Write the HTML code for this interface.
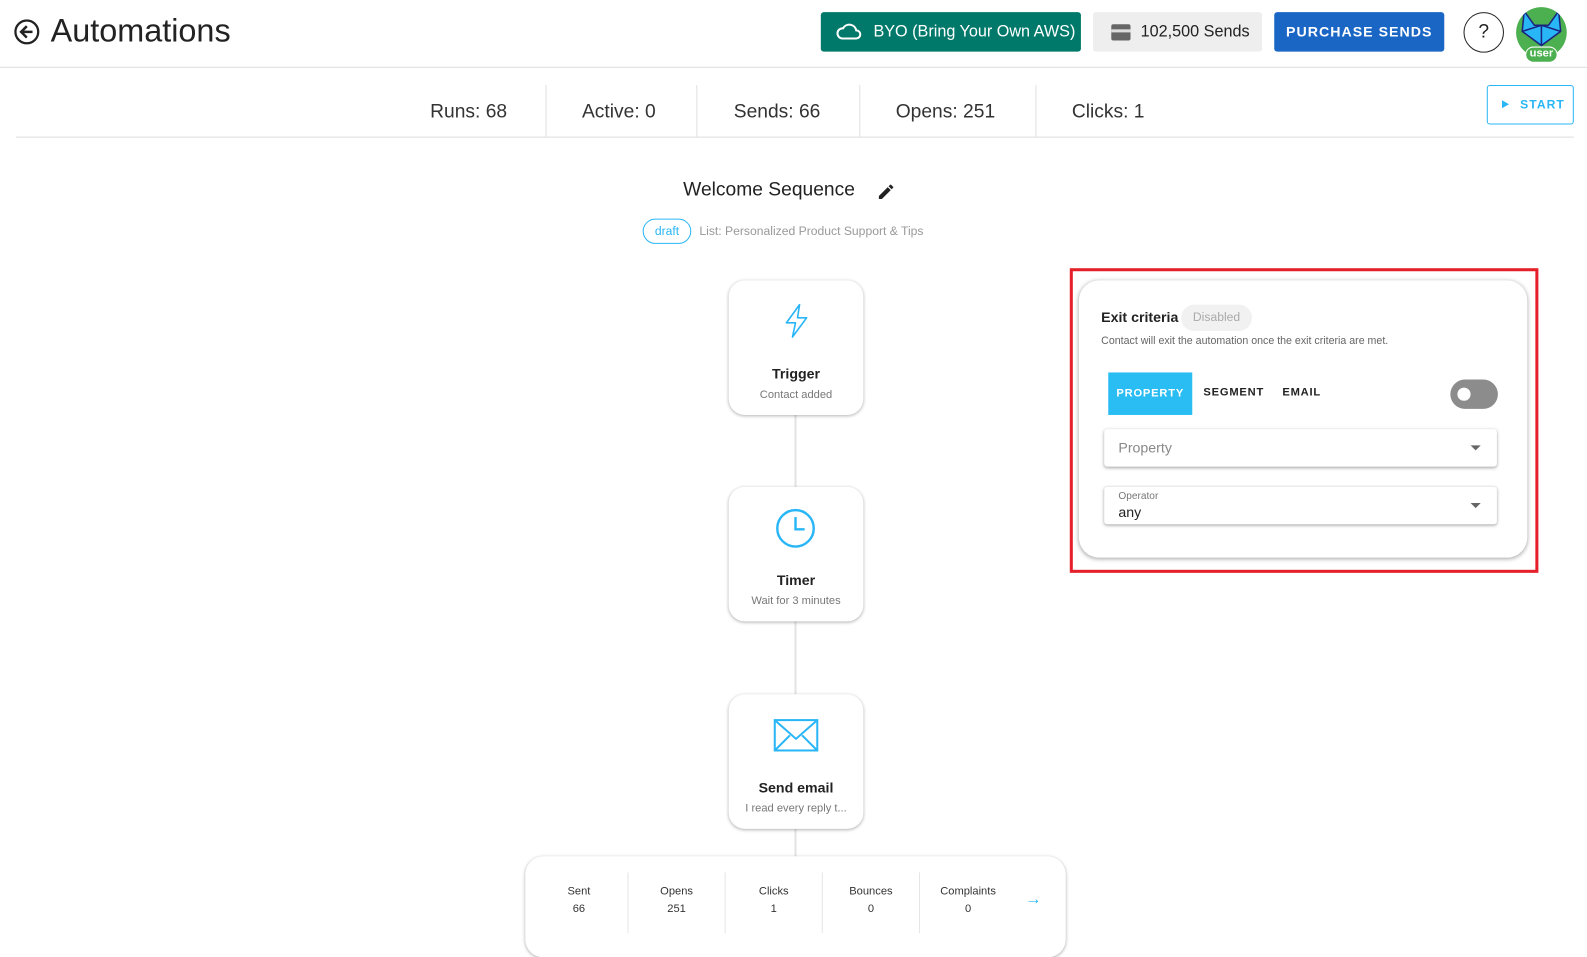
<!DOCTYPE html>
<html><head><meta charset="utf-8"><style>
*{box-sizing:border-box;margin:0;padding:0}
body{width:1587px;height:931px;overflow:hidden;background:#fff;font-family:"Liberation Sans",sans-serif;color:#222;position:relative}
#w{position:absolute;left:0;top:0;width:1568px;height:920px;transform:scale(1.0121);transform-origin:0 0}
.a{position:absolute}
.card{position:absolute;background:#fff;border-radius:16px;box-shadow:0 1px 3px rgba(0,0,0,.3);text-align:center}
.card .t{position:absolute;left:0;right:0;font-weight:bold;font-size:14px;color:#222}
.card .s{position:absolute;left:0;right:0;font-size:11px;color:#777}
.vl{position:absolute;left:785px;width:2px;background:#e3e3e3}
.st{position:absolute;top:111px;font-size:19px;color:#333;transform:translateY(-50%)}
.sd{position:absolute;top:84px;height:51px;width:1px;background:#e0e0e0}
.cell{position:absolute;top:0;height:100%;width:96px;text-align:center;font-size:11px;color:#333}
</style></head><body><div id="w">
<svg class="a" style="left:13px;top:18px" width="27" height="27" viewBox="0 0 24 24"><circle cx="12" cy="12" r="10" fill="none" stroke="#222" stroke-width="2"/><path d="M17 12H8M12 7l-5 5 5 5" fill="none" stroke="#222" stroke-width="2.2"/></svg>
<div class="a" style="left:50px;top:12px;font-size:32px;color:#222">Automations</div>
<div class="a" style="left:811px;top:12px;width:257px;height:39px;background:#00796b;border-radius:3px;color:#fff;font-size:16px;line-height:39px;padding-left:52px">BYO (Bring Your Own AWS)</div>
<svg class="a" style="left:826px;top:21px" width="26" height="20" viewBox="0 0 26 20"><path d="M6 17h14a4 4 0 0 0 0-8 7 7 0 0 0-13-2 5 5 0 0 0-1 10z" fill="none" stroke="#fff" stroke-width="2"/></svg>
<div class="a" style="left:1080px;top:12px;width:167px;height:39px;background:#eee;border-radius:3px;font-size:16px;line-height:39px;padding-left:47px;color:#222">102,500 Sends</div>
<div class="a" style="left:1098px;top:24px;width:19px;height:16px;background:#666;border-radius:2px"><div style="margin-top:5px;height:3px;background:#ddd"></div></div>
<div class="a" style="left:1259px;top:12px;width:168px;height:39px;background:#1a66c5;border-radius:3px;color:#fff;font-size:14px;font-weight:bold;letter-spacing:1px;line-height:39px;text-align:center">PURCHASE SENDS</div>
<div class="a" style="left:1446px;top:12px;width:40px;height:40px;border:1px solid #222;border-radius:50%;text-align:center;line-height:38px;font-size:19px">?</div>
<div class="a" style="left:1498px;top:7px;width:50px;height:50px;border-radius:50%;background:#4caf50;overflow:hidden">
<svg width="50" height="50" viewBox="0 0 50 50"><path d="M8 4l10 14h14L42 4l2 20-19 14L6 24z" fill="#29b6f6" stroke="#1a237e" stroke-width="1.5"/><path d="M6 24l19-6 19 6M25 18v20" fill="none" stroke="#1a237e" stroke-width="1.5"/></svg></div>
<div class="a" style="left:1507px;top:46px;width:32px;height:16px;background:#4caf50;border:1.5px solid #fff;border-radius:8px;color:#fff;font-size:11px;font-weight:bold;text-align:center;line-height:13px">user</div>
<div class="a" style="left:0;top:66px;width:1568px;height:1px;background:#ddd"></div>
<div class="st" style="left:425px">Runs: 68</div>
<div class="sd" style="left:539px"></div>
<div class="st" style="left:575px">Active: 0</div>
<div class="sd" style="left:688px"></div>
<div class="st" style="left:725px">Sends: 66</div>
<div class="sd" style="left:849px"></div>
<div class="st" style="left:885px">Opens: 251</div>
<div class="sd" style="left:1023px"></div>
<div class="st" style="left:1059px">Clicks: 1</div>
<div class="a" style="left:1469px;top:84px;width:86px;height:39px;border:1px solid #29b6f6;border-radius:3px;color:#29b6f6;font-size:12px;font-weight:bold;letter-spacing:1px;line-height:37px;padding-left:32px">START</div>
<div class="a" style="left:1484px;top:99px;width:0;height:0;border-left:7px solid #29b6f6;border-top:4px solid transparent;border-bottom:4px solid transparent"></div>
<div class="a" style="left:16px;top:135px;width:1539px;height:1px;background:#ddd"></div>
<div class="a" style="left:675px;top:177px;font-size:19px;color:#222">Welcome Sequence</div>
<svg class="a" style="left:866px;top:180px" width="19" height="19" viewBox="0 0 24 24"><path d="M3 17.25V21h3.75L17.8 9.94l-3.75-3.75zM20.7 7.04a1 1 0 0 0 0-1.41l-2.34-2.34a1 1 0 0 0-1.41 0l-1.83 1.83 3.75 3.75z" fill="#222"/></svg>
<div class="a" style="left:635px;top:216px;width:48px;height:25px;border:1px solid #29b6f6;border-radius:13px;color:#29b6f6;font-size:12px;text-align:center;line-height:22px">draft</div>
<div class="a" style="left:691px;top:221px;font-size:12px;color:#999">List: Personalized Product Support &amp; Tips</div>
<div class="vl" style="top:410px;height:72px"></div>
<div class="vl" style="top:614px;height:72px"></div>
<div class="vl" style="top:819px;height:28px"></div>
<div class="card" style="left:720px;top:277px;width:133px;height:133px">
<svg style="position:absolute;left:52px;top:22px" width="30" height="36" viewBox="0 0 30 36"><path d="M18 2L5 20h9l-3 14 14-19h-9z" fill="none" stroke="#29b6f6" stroke-width="1.6" stroke-linejoin="round"/></svg>
<div class="t" style="top:84px">Trigger</div><div class="s" style="top:107px">Contact added</div></div>
<div class="card" style="left:720px;top:481px;width:133px;height:133px">
<svg style="position:absolute;left:46px;top:21px" width="40" height="40" viewBox="0 0 40 40"><circle cx="20" cy="20" r="18" fill="none" stroke="#29b6f6" stroke-width="2.4"/><path d="M20 9v12h9" fill="none" stroke="#29b6f6" stroke-width="2.4"/></svg>
<div class="t" style="top:84px">Timer</div><div class="s" style="top:107px">Wait for 3 minutes</div></div>
<div class="card" style="left:720px;top:686px;width:133px;height:133px">
<svg style="position:absolute;left:44px;top:24px" width="45" height="33" viewBox="0 0 45 33"><rect x="1.5" y="1.5" width="42" height="30" fill="none" stroke="#29b6f6" stroke-width="2"/><path d="M1.5 1.5L22.5 20 43.5 1.5M1.5 31.5l15-15M43.5 31.5l-15-15" fill="none" stroke="#29b6f6" stroke-width="2"/></svg>
<div class="t" style="top:84px">Send email</div><div class="s" style="top:107px">I read every reply t...</div></div>
<div class="card" style="left:519px;top:846px;width:534px;height:100px;border-radius:18px">
<div style="position:absolute;left:0;top:16px;height:60px;width:100%">
<div class="cell" style="left:5px"><div style="margin-top:13px">Sent</div><div style="margin-top:5px">66</div></div>
<div class="cell" style="left:101px;border-left:1px solid #e6e6e6"><div style="margin-top:13px">Opens</div><div style="margin-top:5px">251</div></div>
<div class="cell" style="left:197px;border-left:1px solid #e6e6e6"><div style="margin-top:13px">Clicks</div><div style="margin-top:5px">1</div></div>
<div class="cell" style="left:293px;border-left:1px solid #e6e6e6"><div style="margin-top:13px">Bounces</div><div style="margin-top:5px">0</div></div>
<div class="cell" style="left:389px;border-left:1px solid #e6e6e6"><div style="margin-top:13px">Complaints</div><div style="margin-top:5px">0</div></div>
<div style="position:absolute;left:494px;top:18px;color:#29b6f6;font-size:16px;font-weight:bold">→</div>
</div></div>
<div class="a" style="left:1057px;top:265px;width:463px;height:301px;border:3px solid #e5202a"></div>
<div class="a" style="left:1066px;top:277px;width:443px;height:274px;border-radius:20px;box-shadow:0 1px 4px rgba(0,0,0,.35);background:#fff"></div>
<div class="a" style="left:1088px;top:305px;font-size:14px;font-weight:bold;color:#222">Exit criteria</div>
<div class="a" style="left:1167px;top:301px;width:70px;height:26px;border-radius:13px;background:#f1f1f1;color:#aaa;font-size:12px;text-align:center;line-height:25px">Disabled</div>
<div class="a" style="left:1088px;top:331px;font-size:10.5px;color:#666">Contact will exit the automation once the exit criteria are met.</div>
<div class="a" style="left:1095px;top:368px;width:83px;height:42px;background:#29bdf3;color:#fff;font-size:11px;font-weight:bold;letter-spacing:.8px;line-height:42px;text-align:center">PROPERTY</div>
<div class="a" style="left:1189px;top:382px;font-size:11px;font-weight:bold;letter-spacing:.8px;color:#222">SEGMENT</div>
<div class="a" style="left:1267px;top:382px;font-size:11px;font-weight:bold;letter-spacing:.8px;color:#222">EMAIL</div>
<div class="a" style="left:1433px;top:375px;width:47px;height:29px;border-radius:15px;background:#8c8c8c"><div style="position:absolute;left:7px;top:8px;width:13px;height:13px;border-radius:50%;background:#fff"></div></div>
<div class="a" style="left:1091px;top:424px;width:388px;height:37px;border-radius:3px;box-shadow:0 1px 3px rgba(0,0,0,.35);font-size:14px;color:#888;padding:10px 14px">Property</div>
<div class="a" style="left:1453px;top:440px;border-top:5px solid #666;border-left:5px solid transparent;border-right:5px solid transparent"></div>
<div class="a" style="left:1091px;top:481px;width:388px;height:37px;border-radius:3px;box-shadow:0 1px 3px rgba(0,0,0,.35)"><div style="position:absolute;left:14px;top:4px;font-size:10px;color:#777">Operator</div><div style="position:absolute;left:14px;top:17px;font-size:14px;color:#222">any</div></div>
<div class="a" style="left:1453px;top:497px;border-top:5px solid #666;border-left:5px solid transparent;border-right:5px solid transparent"></div>
</div></body></html>
